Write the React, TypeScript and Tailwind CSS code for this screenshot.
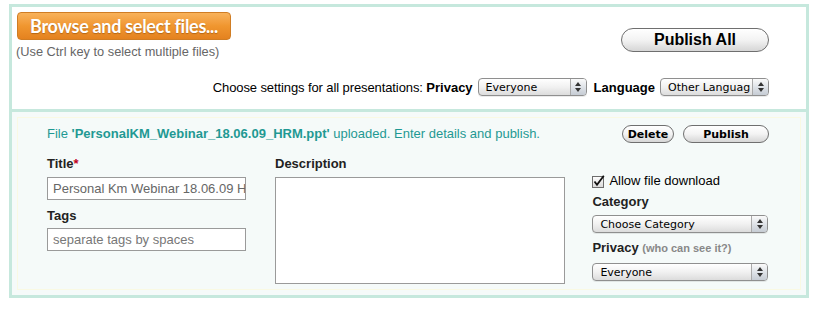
import React from "react";

const MacSelect = ({ value, width }: { value: string; width: string }) => {
  return (
    <div
      className={`${width} h-[18px] flex items-stretch rounded-[4px] border border-[#8f8f8f] bg-gradient-to-b from-white via-[#f1f1f1] to-[#dcdcdc] shadow-[0_1px_0_rgba(0,0,0,0.08)] overflow-hidden`}
    >
      <div className="flex-1 pl-[7px] flex items-center text-[11px] leading-none text-black font-['DejaVu_Sans',sans-serif] whitespace-nowrap overflow-hidden">
        {value}
      </div>
      <div className="w-[16px] border-l border-[#a9a9a9] bg-gradient-to-b from-[#fafafa] via-[#dfe3e8] to-[#c6ccd4] flex flex-col items-center justify-center gap-[2px]">
        <svg width="6" height="4" viewBox="0 0 6 4">
          <path d="M3 0 L6 4 L0 4 Z" fill="#333" />
        </svg>
        <svg width="6" height="4" viewBox="0 0 6 4">
          <path d="M0 0 L6 0 L3 4 Z" fill="#333" />
        </svg>
      </div>
    </div>
  );
};

const PillButton = ({
  label,
  width,
  height,
  text,
}: {
  label: string;
  width: string;
  height: string;
  text: string;
}) => {
  return (
    <button
      className={`${width} ${height} ${text} rounded-full border border-[#6f6f6f] bg-gradient-to-b from-white via-[#f3f3f3] to-[#d6d6d6] font-bold text-black flex items-center justify-center leading-none`}
    >
      {label}
    </button>
  );
};

export default function App() {
  return (
    <div className="w-[818px] h-[314px] bg-white pl-[9px] pt-[4px] font-['Liberation_Sans',Arial,sans-serif]">
      <div className="w-[800px] border-[3px] border-[#c6e8dd]">
        {/* top: browse + global settings */}
        <div className="h-[105px] flex flex-col pr-[37px] border-b-[3px] border-[#c6e8dd] bg-white">
          <div className="flex justify-between">
            <div className="pl-[5px] pt-[5px]">
              <button className="w-[214px] h-[28px] rounded-[4px] border border-[#d07d24] bg-gradient-to-b from-[#f8b25a] via-[#f0962f] to-[#e4821f] text-white font-['Lato',sans-serif] font-bold text-[18px] tracking-[-0.3px] [text-shadow:0_1px_1px_rgba(120,60,0,0.45)] flex items-center justify-center leading-none">
                Browse and select files...
              </button>
              <p className="mt-[4px] -ml-[1px] text-[12.8px] leading-[16px] text-[#666]">
                (Use Ctrl key to select multiple files)
              </p>
            </div>
            <div className="pt-[21px]">
              <PillButton label="Publish All" width="w-[148px]" height="h-[24px]" text="text-[16px]" />
            </div>
          </div>
          <div className="mt-auto mb-[12px] flex justify-end items-center text-[13px] text-black">
            <span className="tracking-[-0.1px]">Choose settings for all presentations:&nbsp;</span>
            <span className="font-bold">Privacy</span>
            <div className="ml-[5px]">
              <MacSelect value="Everyone" width="w-[109px]" />
            </div>
            <span className="ml-[7px] font-bold">Language</span>
            <div className="ml-[5px]">
              <MacSelect value="Other Languag" width="w-[109px]" />
            </div>
          </div>
        </div>

        {/* bottom: uploaded file */}
        <div className="bg-[#f5faf9] p-[5px]">
          <div className="h-[173px] border border-[#f9f9e3] pl-[29px] pr-[31px] pt-[7px]">
            <div className="flex justify-between items-center">
              <p className="text-[13px] text-[#1f9993] leading-[16px]">
                File <span className="font-bold">'PersonalKM_Webinar_18.06.09_HRM.ppt'</span> uploaded. Enter details and publish.
              </p>
              <div className="flex gap-[9px]">
                <PillButton label="Delete" width="w-[52px]" height="h-[18px]" text="text-[11px] font-['DejaVu_Sans',sans-serif]" />
                <PillButton label="Publish" width="w-[86px]" height="h-[18px]" text="text-[11px] font-['DejaVu_Sans',sans-serif]" />
              </div>
            </div>

            <div className="mt-[13px] flex">
              <div className="w-[199px]">
                <label className="block text-[13px] font-bold text-[#222] leading-[16px]">
                  Title<span className="text-[#c0001a]">*</span>
                </label>
                <div className="mt-[5px] h-[23px] border border-[#9a9a9a] bg-white pl-[5px] flex items-center overflow-hidden whitespace-nowrap text-[13px] text-[#666]">
                  Personal Km Webinar 18.06.09 H
                </div>
                <label className="mt-[8px] block text-[13px] font-bold text-[#222] leading-[16px]">Tags</label>
                <div className="mt-[4px] h-[23px] border border-[#9a9a9a] bg-white pl-[5px] flex items-center text-[13px] text-[#777]">
                  separate tags by spaces
                </div>
              </div>

              <div className="ml-[29px] w-[291px]">
                <label className="block text-[13px] font-bold text-[#222] leading-[16px]">Description</label>
                <div className="mt-[5px] h-[107px] border border-[#9a9a9a] bg-white" />
              </div>

              <div className="ml-[27px] w-[177px] pt-[17px]">
                <div className="flex items-center gap-[4px] text-[13px] text-black leading-[16px]">
                  <svg width="13" height="13" viewBox="0 0 13 13">
                    <defs>
                      <linearGradient id="cb" x1="0" y1="0" x2="0" y2="1">
                        <stop offset="0" stopColor="#ffffff" />
                        <stop offset="1" stopColor="#d8d8d8" />
                      </linearGradient>
                    </defs>
                    <rect x="0.5" y="1.5" width="11" height="11" fill="url(#cb)" stroke="#6d6d6d" />
                    <path d="M2.5 6.5 L5 9.8 L11.8 0.8" fill="none" stroke="#111" strokeWidth="1.8" />
                  </svg>
                  <span>Allow file download</span>
                </div>
                <label className="mt-[5px] block text-[13px] font-bold text-[#222] leading-[16px]">Category</label>
                <div className="mt-[5px]">
                  <MacSelect value="Choose Category" width="w-[176px]" />
                </div>
                <label className="mt-[7px] block text-[13px] font-bold text-[#222] leading-[16px]">
                  Privacy <span className="text-[11px] text-[#888]">(who can see it?)</span>
                </label>
                <div className="mt-[7px]">
                  <MacSelect value="Everyone" width="w-[176px]" />
                </div>
              </div>
            </div>
          </div>
        </div>
      </div>
    </div>
  );
}
